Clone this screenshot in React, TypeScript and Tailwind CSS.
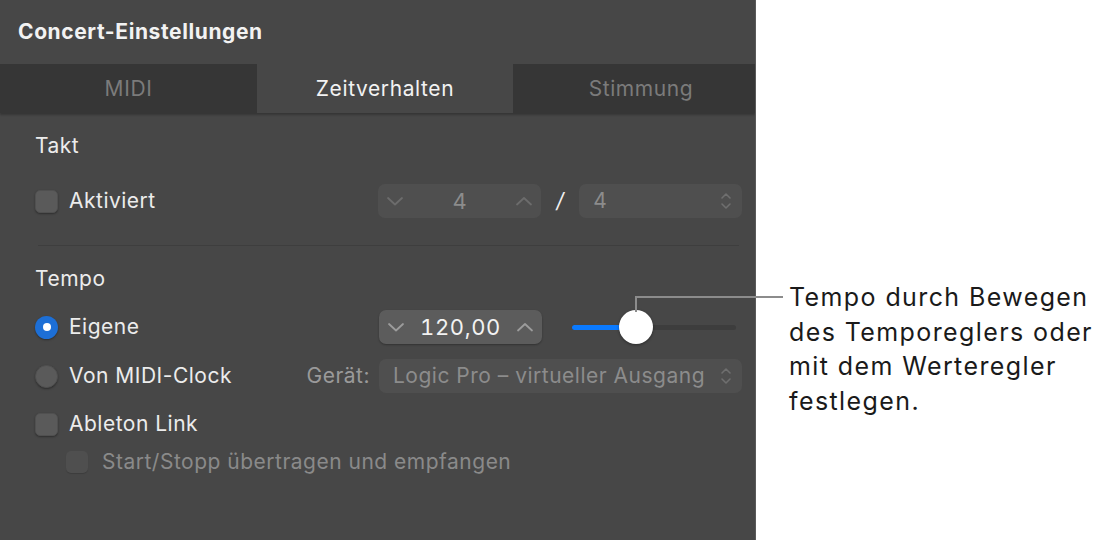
import * as React from "react";

const Down = ({ className = "" }: { className?: string }) => (
  <svg width="18" height="10" viewBox="0 0 18 10" className={className} fill="none">
    <polyline points="2,2 9,8.5 16,2" stroke="currentColor" strokeWidth="1.8" strokeLinecap="round" strokeLinejoin="round" />
  </svg>
);

const Up = ({ className = "" }: { className?: string }) => (
  <svg width="18" height="10" viewBox="0 0 18 10" className={className} fill="none">
    <polyline points="2,8.5 9,2 16,8.5" stroke="currentColor" strokeWidth="1.8" strokeLinecap="round" strokeLinejoin="round" />
  </svg>
);

const UpDown = () => (
  <svg width="12" height="18" viewBox="0 0 12 18" fill="none" className="text-[#6f6f6f]">
    <polyline points="2,6 6,2 10,6" stroke="currentColor" strokeWidth="1.6" strokeLinecap="round" strokeLinejoin="round" />
    <polyline points="2,12 6,16 10,12" stroke="currentColor" strokeWidth="1.6" strokeLinecap="round" strokeLinejoin="round" />
  </svg>
);

const Checkbox = ({ dim = false }: { dim?: boolean }) => (
  <div
    className={
      dim
        ? "size-[22px] rounded-[5px] bg-[#4f4f4f] shadow-[0_1px_1px_rgba(0,0,0,0.15)]"
        : "size-[23px] rounded-[5px] bg-[#5a5a5a] shadow-[0_1px_2px_rgba(0,0,0,0.35)] border border-[#505050]"
    }
  />
);

const Radio = ({ on = false }: { on?: boolean }) =>
  on ? (
    <div className="size-[23px] rounded-full bg-[#1d6fd6] flex items-center justify-center shadow-[0_1px_2px_rgba(0,0,0,0.35)]">
      <div className="size-[8px] rounded-full bg-white" />
    </div>
  ) : (
    <div className="size-[23px] rounded-full bg-[#5a5a5a] border border-[#505050] shadow-[0_1px_2px_rgba(0,0,0,0.35)]" />
  );

const Stepper = ({ value, active = false }: { value: string; active?: boolean }) => (
  <div
    className={
      "w-[163px] h-[34px] rounded-[7px] flex items-center justify-between px-[8px] " +
      (active
        ? "bg-[#5c5c5c] text-[#f2f2f2] shadow-[0_1px_2px_rgba(0,0,0,0.3)]"
        : "bg-[#4f4f4f] text-[#8c8c8c]")
    }
  >
    <Down className={active ? "text-[#9c9c9c]" : "text-[#6c6c6c]"} />
    <span className="text-[22px] tracking-[0.6px] tabular-nums">{value}</span>
    <Up className={active ? "text-[#9c9c9c]" : "text-[#6c6c6c]"} />
  </div>
);

export default function App() {
  return (
    <div
      className="relative flex h-[540px] w-[1101px] bg-white"
      style={{ fontFamily: "Inter, 'Noto Sans', sans-serif" }}
    >
      <div className="w-[756px] h-full bg-[#474747] border-r border-[#5a5a5a] flex flex-col overflow-hidden">
        <div className="h-[64px] flex items-center px-[18px] text-[21px] font-bold text-[#f2f2f2] tracking-[0.6px]">
          Concert-Einstellungen
        </div>
        <div className="h-[49px] flex text-[21px] tracking-[0.6px] shadow-[0_2px_2px_rgba(0,0,0,0.25)] relative">
          <div className="w-[257px] shrink-0 bg-[#363636] flex items-center justify-center text-[#7b7b7b]">MIDI</div>
          <div className="w-[256px] shrink-0 flex items-center justify-center text-[#f2f2f2]">Zeitverhalten</div>
          <div className="w-[256px] shrink-0 bg-[#363636] flex items-center justify-center text-[#7b7b7b]">Stimmung</div>
        </div>

        <div className="pl-[35px] pr-[13px] text-[21px] tracking-[0.5px] text-[#ececec]">
          <div className="h-[24px] mt-[21px] flex items-center">Takt</div>

          <div className="h-[34px] mt-[26px] flex items-center">
            <div className="w-[344px] flex items-center gap-[11px]">
              <Checkbox />
              <span>Aktiviert</span>
            </div>
            <Stepper value="4" />
            <div className="w-[38px] flex justify-center text-[#f2f2f2] italic">/</div>
            <div className="w-[163px] h-[34px] rounded-[7px] bg-[#4f4f4f] flex items-center justify-between pl-[14px] pr-[10px] text-[#8c8c8c]">
              <span>4</span>
              <UpDown />
            </div>
          </div>

          <div className="h-px bg-[#3e3e3e] mt-[27px] ml-[3px] mr-[3px]" />

          <div className="h-[24px] mt-[21px] flex items-center">Tempo</div>

          <div className="h-[34px] mt-[19px] flex items-center">
            <div className="w-[344px] flex items-center gap-[11px]">
              <Radio on />
              <span>Eigene</span>
            </div>
            <Stepper value="120,00" active />
            <div className="ml-[30px] w-[164px] h-[34px] relative flex items-center">
              <div className="w-full h-[5px] rounded-full bg-[#3d3d3d]" />
              <div className="absolute left-0 top-[15px] w-[64px] h-[5px] rounded-full bg-[#0a7aff]" />
              <div className="absolute left-[47px] top-0 size-[34px] rounded-full bg-white shadow-[0_1px_3px_rgba(0,0,0,0.4)]" />
            </div>
          </div>

          <div className="h-[34px] mt-[15px] flex items-center">
            <div className="w-[344px] flex items-center">
              <div className="flex items-center gap-[11px]">
                <Radio />
                <span>Von MIDI-Clock</span>
              </div>
              <span className="ml-auto mr-[9px] text-[#9a9a9a]">Gerät:</span>
            </div>
            <div className="w-[363px] h-[34px] rounded-[7px] bg-[#4f4f4f] flex items-center justify-between pl-[14px] pr-[10px] text-[#8c8c8c]">
              <span>Logic Pro – virtueller Ausgang</span>
              <UpDown />
            </div>
          </div>

          <div className="h-[34px] mt-[14px] flex items-center gap-[11px]">
            <Checkbox />
            <span>Ableton Link</span>
          </div>

          <div className="h-[24px] mt-[9px] ml-[31px] flex items-center gap-[14px] text-[#8a8a8a]">
            <Checkbox dim />
            <span>Start/Stopp übertragen und empfangen</span>
          </div>
        </div>
      </div>

      <div className="flex-1 pl-[33px] pt-[280px] text-[25px] tracking-[1.4px] leading-[34.5px] text-[#1a1a1a]">
        Tempo durch Bewegen
        <br />
        des Temporeglers oder
        <br />
        mit dem Werteregler
        <br />
        festlegen.
      </div>

      <div className="absolute left-[635px] top-[296px] w-[148px] h-[2px] bg-[#8c8c8c]" />
      <div className="absolute left-[635px] top-[296px] w-[2px] h-[16px] bg-[#8c8c8c]" />
    </div>
  );
}
